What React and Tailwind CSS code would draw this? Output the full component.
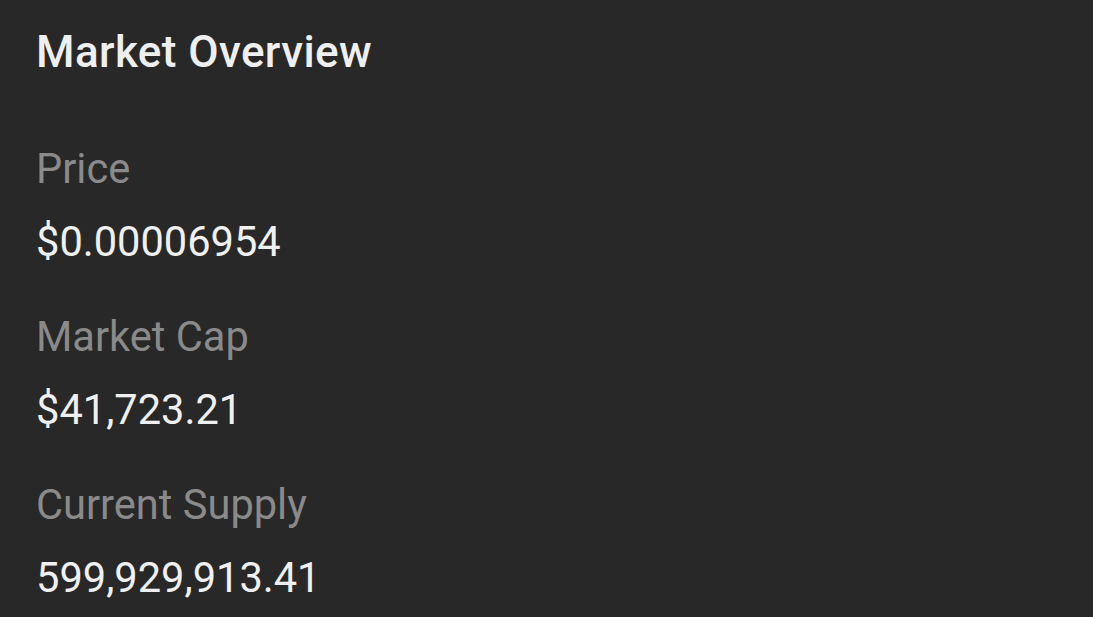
const stats = [
  { label: "Price", value: "$0.00006954" },
  { label: "Market Cap", value: "$41,723.21" },
  { label: "Current Supply", value: "599,929,913.41" },
];

export default function App() {
  return (
    <div className="min-h-screen w-full bg-[#282828] px-[36px] pt-[26px] font-['Roboto',sans-serif]">
      <h2 className="text-[44px] leading-[52px] font-medium tracking-[0.4px] text-[#efefef]">Market Overview</h2>
      <div className="mt-[67px] flex flex-col gap-[47px]">
        {stats.map((s) => (
          <div key={s.label} className="flex flex-col gap-[25px]">
            <span className="text-[41.6px] leading-[48px] text-[#8a8a8a]">{s.label}</span>
            <span className="text-[41.6px] leading-[48px] text-[#f0f0f0]">{s.value}</span>
          </div>
        ))}
      </div>
    </div>
  );
}
